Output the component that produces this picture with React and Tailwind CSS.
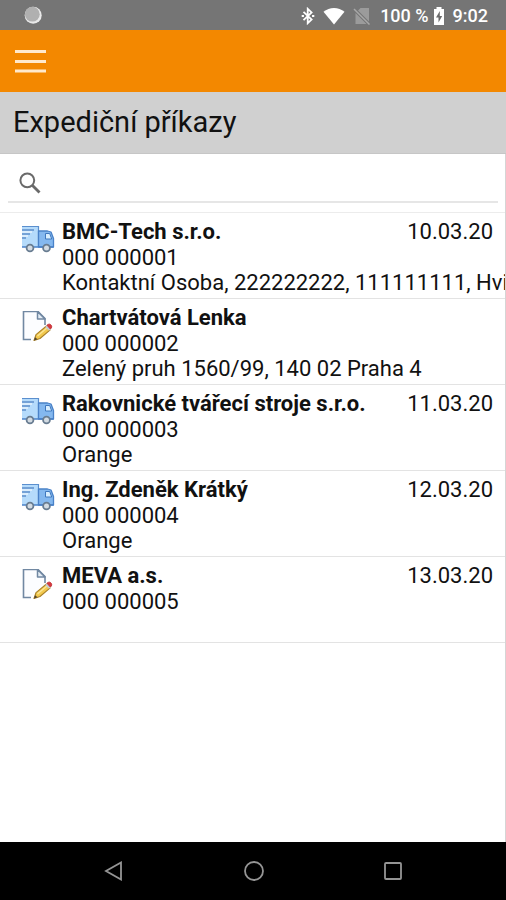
import React, { useState } from 'react';

const ORDERS = [
    { id: 1, type: 'truck', name: 'BMC-Tech s.r.o.', number: '000 000001', note: 'Kontaktní Osoba, 222222222, 111111111, Hvi', date: '10.03.20' },
    { id: 2, type: 'draft', name: 'Chartvátová Lenka', number: '000 000002', note: 'Zelený pruh 1560/99, 140 02 Praha 4', date: '' },
    { id: 3, type: 'truck', name: 'Rakovnické tvářecí stroje s.r.o.', number: '000 000003', note: 'Orange', date: '11.03.20' },
    { id: 4, type: 'truck', name: 'Ing. Zdeněk Krátký', number: '000 000004', note: 'Orange', date: '12.03.20' },
    { id: 5, type: 'draft', name: 'MEVA a.s.', number: '000 000005', note: '', date: '13.03.20' },
];

const TruckIcon = () => (
    <svg viewBox="0 0 34 28" className="w-[34px] h-7" aria-hidden="true">
        <path d="M1 1.5h16.5v20.5H1z" fill="#b5dbfb" />
        <path d="M1 1.5h16.5v20.5" fill="none" stroke="#5b8fce" strokeWidth="1.2" />
        <path d="M1 5h12M1 9h8M1 13h4" stroke="#5f90cb" strokeWidth="1.5" />
        <path d="M1 7h10M1 11h6" stroke="#ffffff" strokeWidth="1.2" />
        <path d="M17.5 6h9l3.5 1 2.5 6.5V22h-15z" fill="#84b8ef" stroke="#4a82c8" strokeWidth="1.3" strokeLinejoin="round" />
        <path d="M24.5 8.5h4.2l2 5.5h-6.2z" fill="#d8eefe" stroke="#3f78be" strokeWidth="1" />
        <path d="M1 22h31.5" stroke="#4a82c8" strokeWidth="1.5" />
        <circle cx="9" cy="23" r="3.4" fill="#d3dbe2" stroke="#687c91" strokeWidth="1.8" />
        <circle cx="25.5" cy="23" r="3.4" fill="#d3dbe2" stroke="#687c91" strokeWidth="1.8" />
    </svg>
);

const DraftIcon = () => (
    <svg viewBox="1 2 32 32" className="w-8 h-8" aria-hidden="true">
        <path d="M11 30.5H3.5v-28H18l7 7V16" fill="#fcfdff" stroke="#7188a2" strokeWidth="1.6" />
        <path d="M17.5 2.5v7.5H25z" fill="#e4edf5" stroke="#7188a2" strokeWidth="1.5" strokeLinejoin="round" />
        <path d="M14 31.5l2-5.8L26.5 17l3.7 3.8L20 29.5z" fill="#f2c94e" stroke="#a98028" strokeWidth="1.1" strokeLinejoin="round" />
        <path d="M17.5 27L28 18" stroke="#fbe697" strokeWidth="1.3" />
        <path d="M14 31.5l1.1-3.2 2.4 2z" fill="#4d4332" />
        <path d="M25.2 18l1.8-1.6 3.8 3.8-1.8 1.6z" fill="#c5ccd2" />
        <path d="M27 16.2c1.8-1.6 3.4-1.2 4.2.1.9 1.3.5 2.6-.8 3.7z" fill="#d73a3f" stroke="#c22e35" strokeWidth="1" />
    </svg>
);

const StatusBar = () => (
    <div className="flex h-[30px] items-center justify-between bg-[#757575] pl-6 pr-[18px] text-white">
        <svg viewBox="0 0 18 18" className="h-[18px] w-[18px]" aria-hidden="true">
            <circle cx="9.2" cy="9.2" r="8.5" fill="#e9e9e9" />
            <circle cx="8.3" cy="8.2" r="7.4" fill="#b0b0b0" />
        </svg>
        <div className="flex items-center pt-[2px]">
            <svg viewBox="0 0 14 20" className="mr-2 h-[18px] w-[14px]" fill="none" stroke="#ffffff" strokeWidth="2" aria-hidden="true">
                <path d="M2 5.5l9 8.5-4.3 4V2L11 6l-9 8.5" />
                <path d="M0 10h2.500M11.500 10H14" />
            </svg>
            <svg viewBox="0 0 22 18" className="mr-2 h-[18px] w-[22px]" aria-hidden="true">
                <path d="M0.5 4.8C6.5-.3 15.5-.3 21.5 4.8L11 17.5z" fill="#ffffff" />
            </svg>
            <svg viewBox="0 0 18 18" className="mr-[9px] h-[18px] w-[18px]" aria-hidden="true">
                <path d="M7.5 1H16v13.5L5 3.5zM2.5 6L13.5 17h-11z" fill="#9b9b9b" />
                <path d="M1 2l15.5 15.5" stroke="#a8a8a8" strokeWidth="1.5" />
            </svg>
            <span className="text-lg font-medium leading-5">100 %</span>
            <svg viewBox="0 0 12 20" className="ml-1 mr-2 h-5 w-3" aria-hidden="true">
                <path d="M3.5 1h5v2H11v16H1V3h2.5z" fill="#ffffff" />
                <path d="M6.8 5L3 11.5h2.5v5L9.2 10H6.8z" fill="#6b6b6b" />
            </svg>
            <span className="text-lg font-medium leading-5">9:02</span>
        </div>
    </div>
);

const OrderRow = ({ order }) => (
    <li className="flex h-[86px] items-start border-b border-[#e3e3e3] pl-5 pt-[6px]">
        <div className="flex w-[42px] shrink-0 pl-px pt-[6px]">
            {order.type === 'truck' ? <TruckIcon /> : <DraftIcon />}
        </div>
        <div className="min-w-0 flex-1 text-[22px] leading-[25px]">
            <div className="flex justify-between gap-2 pr-3 leading-[26px]">
                <h2 className="truncate font-bold">{order.name}</h2>
                <span className="shrink-0">{order.date}</span>
            </div>
            <p>{order.number}</p>
            <p className="whitespace-nowrap">{order.note}</p>
        </div>
    </li>
);

const NavBar = () => (
    <nav className="flex h-[58px] items-center justify-between bg-black pl-[100px] pr-[99px]">
        <button aria-label="Zpět" className="flex w-7 justify-center">
            <svg viewBox="0 0 20 20" className="h-5 w-5" fill="none" stroke="#959595" strokeWidth="1.8">
                <path d="M17 1.5v17L2 10z" />
            </svg>
        </button>
        <button aria-label="Domů" className="flex w-7 justify-center">
            <svg viewBox="0 0 20 20" className="h-5 w-5" fill="none" stroke="#959595" strokeWidth="1.8">
                <circle cx="10" cy="10" r="9" />
            </svg>
        </button>
        <button aria-label="Přehled" className="flex w-7 justify-center">
            <svg viewBox="0 0 20 20" className="h-5 w-5" fill="none" stroke="#959595" strokeWidth="1.8">
                <rect x="2" y="2" width="16" height="16" rx="1" />
            </svg>
        </button>
    </nav>
);

const App = () => {
    const [query, setQuery] = useState('');
    const visible = ORDERS.filter((o) => o.name.toLowerCase().includes(query.toLowerCase()));

    return (
        <div className="flex min-h-screen flex-col bg-white font-[Roboto,sans-serif] text-[#111111]">
            <StatusBar />

            <header className="flex h-[62px] items-center bg-[#f38800] pl-[15px]">
                <button aria-label="Menu">
                    <svg viewBox="0 0 31 24" className="h-6 w-[31px]" stroke="#ffe9cc" strokeWidth="3">
                        <path d="M0 2.5h31M0 12.5h31M0 22h31" />
                    </svg>
                </button>
            </header>

            <h1 className="h-[62px] border-b border-[#c6c6c6] bg-[#d0d0d0] pl-[13px] text-[29px] leading-[61px]">Expediční příkazy</h1>

            <main className="flex-1 overflow-x-hidden border-r border-[#d5d5d5]">
                {/* --- Search --- */}
                <div className="border-b border-[#ececec] pb-[9px] pl-2 pr-[7px]">
                    <label className="flex h-[49px] items-center border-b-2 border-[#e6e6e6] pl-[11px] pt-[11px]">
                        <svg viewBox="0 0 22 22" className="h-[22px] w-[22px]" fill="none" stroke="#6a6a6a" aria-hidden="true">
                            <circle cx="8.3" cy="8.3" r="6.9" strokeWidth="2" />
                            <path d="M13 13l7.5 7.5" strokeWidth="2.8" />
                        </svg>
                        <input
                            type="text"
                            aria-label="Hledat"
                            value={query}
                            onChange={(e) => setQuery(e.target.value)}
                            className="ml-3 min-w-0 flex-1 bg-transparent text-[22px] leading-6 outline-none"
                        />
                    </label>
                </div>

                {/* --- Orders --- */}
                <ul>
                    {visible.map((order) => (
                        <OrderRow key={order.id} order={order} />
                    ))}
                </ul>
            </main>

            <NavBar />
        </div>
    );
};

export default App;
